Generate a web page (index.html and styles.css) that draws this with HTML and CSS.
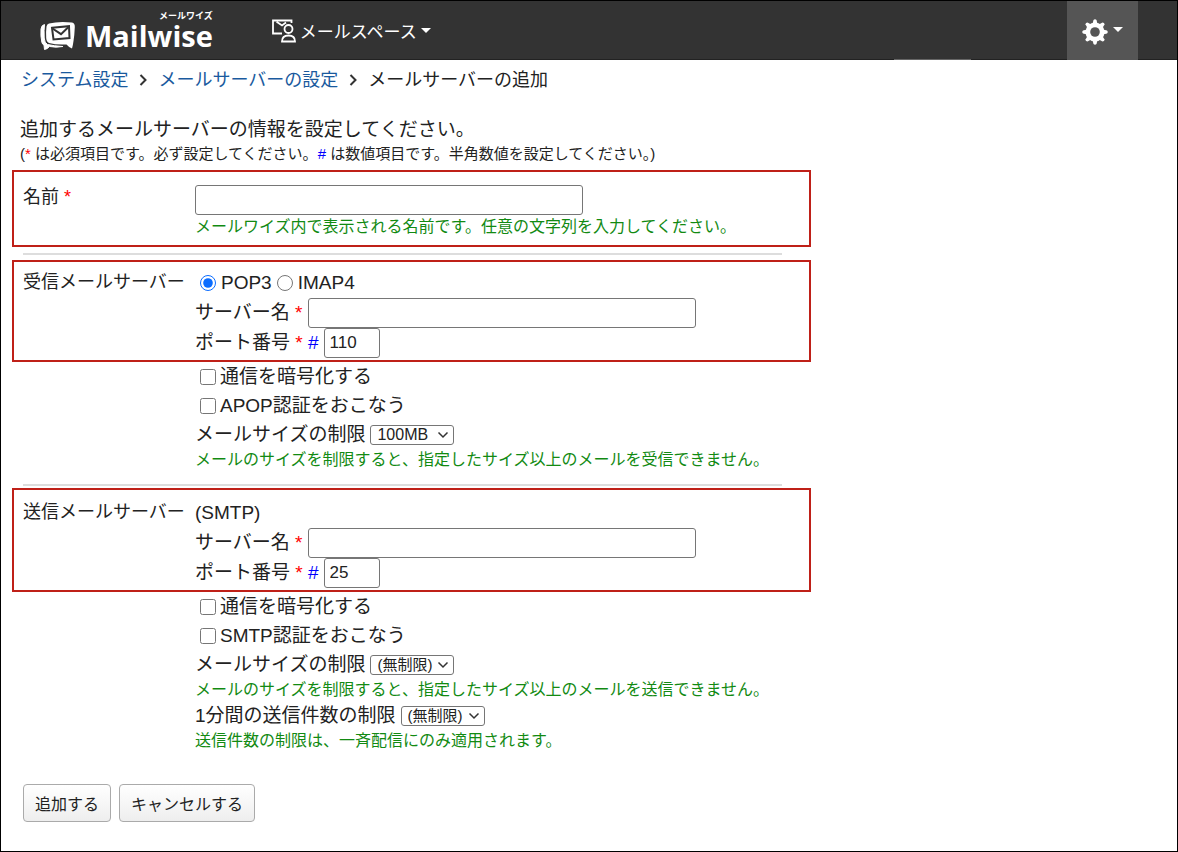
FILE: index.html
```html
<!DOCTYPE html>
<html lang="ja">
<head>
<meta charset="utf-8">
<title>メールサーバーの追加 - Mailwise</title>
<link rel="stylesheet" href="styles.css">
</head>
<body>
<div class="page">
  <header class="header">
    <a class="logo" href="#">
      <svg class="logo-mark" viewBox="0 0 36 30" aria-hidden="true">
        <path d="M10 2.500Q20 0 33 1.500Q36 2 35.800 6Q35.500 14 34.500 20Q34 24 33 27.500Q30 26.500 27.500 23.500Q17 24 10 22Q7.500 21 7.200 17Q6.800 11 7.500 5.500Q8 3 10 2.500Z" fill="#fff"/>
        <path d="M13 6.800L30 5.200L30.500 17L14.500 18.500Z" fill="none" stroke="#333" stroke-width="2"/>
        <path d="M13.500 7.500L22 13.200L29.500 6" fill="none" stroke="#333" stroke-width="2"/>
        <path d="M5.500 3.500Q2.500 4 2 8Q1.500 15 2.800 21Q3.300 23.500 5 24L5.500 28.500Q8.500 28 10.500 25.500Q17 26.800 24 25.500Q15 25 8.500 23.500Q5.500 22 5.200 17Q4.800 9 5.500 3.500Z" fill="#fff" stroke="#fff"/>
      </svg>
      <span class="logo-text"><span class="logo-kana">メールワイズ</span><span class="logo-name">Mailwise</span></span>
    </a>
    <button class="space-menu" type="button">
      <svg class="space-icon" viewBox="0 0 26 26" fill="none" stroke="#fff" stroke-width="1.800" aria-hidden="true">
        <path d="M11 16.500H2V3.500H20.500V6M5.500 5L7.500 6L11 8.500L15 5.500"/>
        <circle cx="17.500" cy="12" r="4"/>
        <path d="M11 24.500Q11 18.500 17.500 18.500Q24 18.500 24 24.500Z"/>
      </svg>
      <span>メールスペース</span>
      <span class="caret"></span>
    </button>
    <button class="gear-menu" type="button" aria-label="設定">
      <svg class="gear" viewBox="0 0 26 26" aria-hidden="true">
        <g fill="#fff">
          <path id="tooth" d="M10.500 5L11.500 1Q13-.500 14.500 1L15.500 5V21L14.500 25Q13 26.500 11.500 25L10.500 21Z"/>
          <use href="#tooth" transform="rotate(45 13 13)"/>
          <use href="#tooth" transform="rotate(90 13 13)"/>
          <use href="#tooth" transform="rotate(135 13 13)"/>
          <circle cx="13" cy="13" r="9.500"/>
        </g>
        <circle cx="13" cy="13" r="4.800" fill="#555"/>
      </svg>
      <span class="caret"></span>
    </button>
  </header>

  <main class="content">
    <nav class="crumbs">
      <a href="#">システム設定</a>
      <svg class="chevron" viewBox="0 0 8 12" aria-hidden="true"><path d="M1.500 1L6.500 6L1.500 11"/></svg>
      <a href="#">メールサーバーの設定</a>
      <svg class="chevron" viewBox="0 0 8 12" aria-hidden="true"><path d="M1.500 1L6.500 6L1.500 11"/></svg>
      <span>メールサーバーの追加</span>
    </nav>

    <p class="lead">追加するメールサーバーの情報を設定してください。</p>
    <p class="note">(<span class="req">*</span> は必須項目です。必ず設定してください。<span class="num">#</span> は数値項目です。半角数値を設定してください。)</p>

    <form class="form">
      <section class="row framed name-row">
        <label class="title" for="name">名前 <span class="req">*</span></label>
        <div class="fields">
          <input class="text" id="name" type="text">
          <p class="help">メールワイズ内で表示される名前です。任意の文字列を入力してください。</p>
        </div>
      </section>

      <hr class="rule">

      <section class="row framed">
        <span class="title">受信メールサーバー</span>
        <div class="fields">
          <div class="line radios">
            <input class="pick" id="pop" type="radio" name="protocol" checked><label for="pop">POP3</label>
            <input class="pick" id="imap" type="radio" name="protocol"><label for="imap">IMAP4</label>
          </div>
          <div class="line"><label for="in-host">サーバー名 <span class="req">*</span></label><input class="text" id="in-host" type="text"></div>
          <div class="line"><label for="in-port">ポート番号 <span class="req">*</span> <span class="num">#</span></label><input class="text port" id="in-port" type="text" value="110"></div>
        </div>
      </section>
      <div class="fields options">
        <div class="line check"><input class="pick" id="in-ssl" type="checkbox"><label for="in-ssl">通信を暗号化する</label></div>
        <div class="line check"><input class="pick" id="apop" type="checkbox"><label for="apop">APOP認証をおこなう</label></div>
        <div class="line"><label for="in-size">メールサイズの制限</label><span class="select"><select id="in-size" class="latin"><option>100MB</option></select><svg viewBox="0 0 12 8" aria-hidden="true"><path d="M1.500 1.500L6 6L10.500 1.500"/></svg></span></div>
        <p class="help">メールのサイズを制限すると、指定したサイズ以上のメールを受信できません。</p>
      </div>

      <hr class="rule late">

      <section class="row framed smtp-row">
        <span class="title">送信メールサーバー</span>
        <div class="fields">
          <div class="line">(SMTP)</div>
          <div class="line"><label for="out-host">サーバー名 <span class="req">*</span></label><input class="text" id="out-host" type="text"></div>
          <div class="line"><label for="out-port">ポート番号 <span class="req">*</span> <span class="num">#</span></label><input class="text port" id="out-port" type="text" value="25"></div>
        </div>
      </section>
      <div class="fields options">
        <div class="line check"><input class="pick" id="out-ssl" type="checkbox"><label for="out-ssl">通信を暗号化する</label></div>
        <div class="line check"><input class="pick" id="smtp-auth" type="checkbox"><label for="smtp-auth">SMTP認証をおこなう</label></div>
        <div class="line"><label for="out-size">メールサイズの制限</label><span class="select"><select id="out-size"><option>(無制限)</option></select><svg viewBox="0 0 12 8" aria-hidden="true"><path d="M1.500 1.500L6 6L10.500 1.500"/></svg></span></div>
        <p class="help">メールのサイズを制限すると、指定したサイズ以上のメールを送信できません。</p>
        <div class="line"><label for="rate">1分間の送信件数の制限</label><span class="select"><select id="rate"><option>(無制限)</option></select><svg viewBox="0 0 12 8" aria-hidden="true"><path d="M1.500 1.500L6 6L10.500 1.500"/></svg></span></div>
        <p class="help">送信件数の制限は、一斉配信にのみ適用されます。</p>
      </div>

      <div class="actions">
        <button class="button" type="submit">追加する</button>
        <button class="button" type="button">キャンセルする</button>
      </div>
    </form>
  </main>
</div>
</body>
</html>
```

FILE: styles.css
```css
* {
  box-sizing: border-box;
}

body {
  margin: 0;
  color: #222;
  background: #fff;
  font-family: "Liberation Sans", "Noto Sans CJK JP", sans-serif;
  font-size: 19px;
  line-height: 24px;
}

p {
  margin: 0;
}

button,
input,
select {
  margin: 0;
  font-family: inherit;
  color: inherit;
}

.page {
  min-height: 100vh;
  border: 1px solid #000;
}

/* Header */
.header {
  position: relative;
  display: flex;
  align-items: stretch;
  height: 59px;
  padding: 0 39px 0 38px;
  background: #333;
  border-bottom: 1px solid #222;
  color: #fff;
}

.header::after {
  content: "";
  position: absolute;
  right: 206px;
  bottom: -1px;
  width: 77px;
  height: 1px;
  background: #666;
}

.logo {
  display: flex;
  align-items: flex-end;
  gap: 10px;
  padding-bottom: 8px;
  color: #fff;
  text-decoration: none;
}

.logo-mark {
  width: 36px;
  height: 30px;
}

.logo-text {
  display: flex;
  flex-direction: column;
  align-items: flex-end;
}

.logo-kana {
  font-size: 9px;
  line-height: 10px;
  font-weight: 700;
}

.logo-name {
  font-family: "Open Sans", sans-serif;
  font-size: 29px;
  line-height: 30px;
  font-weight: 700;
}

.space-menu,
.gear-menu {
  display: flex;
  align-items: center;
  border: 0;
  background: none;
  color: #fff;
}

.space-menu {
  gap: 3px;
  margin-left: 58px;
  padding: 0;
  font-size: 17px;
}

.space-icon {
  width: 26px;
  height: 26px;
}

.caret {
  border: 5px solid transparent;
  border-top-color: #fff;
  border-bottom-width: 0;
}

.space-menu .caret {
  margin-left: 1px;
}

.gear-menu {
  gap: 5px;
  margin: 0 0 -1px auto;
  padding: 2px 15px 0;
  background: #555;
}

.gear {
  width: 26px;
  height: 26px;
}

.gear-menu .caret {
  margin-bottom: 4px;
}

/* Breadcrumbs and introduction */
.content {
  padding: 8px 12px 26px 11px;
}

.crumbs {
  display: flex;
  align-items: center;
  gap: 11px;
  padding-left: 9px;
  font-size: 18px;
}

.crumbs a {
  color: #1a5a9e;
  text-decoration: none;
}

.chevron {
  width: 8px;
  height: 12px;
  fill: none;
  stroke: #333;
  stroke-width: 2;
}

.lead {
  margin-top: 26px;
  padding-left: 8px;
}

.note {
  padding-left: 8px;
  margin-bottom: 4px;
  font-size: 15px;
}

.req {
  color: #f00;
}

.num {
  color: #00f;
}

/* Form */
.form {
  max-width: 799px;
}

.row {
  display: grid;
  grid-template-columns: 172px 1fr;
}

.framed {
  border: 2px solid #bf2018;
  padding: 6px 8px 2px 9px;
}

.title {
  padding-top: 2px;
  font-size: 18px;
  white-space: nowrap;
}

.name-row {
  padding-top: 13px;
  padding-bottom: 6px;
}

.name-row .title {
  padding-top: 0;
}

.name-row .text {
  display: block;
}

.smtp-row {
  padding-top: 8px;
}

.rule {
  height: 2px;
  margin: 6px 29px 5px 11px;
  border: 0;
  background: #ddd;
}

.rule.late {
  margin: 13px 29px 2px 11px;
}

.options {
  padding-left: 183px;
}

.line {
  display: flex;
  align-items: center;
  gap: 5px;
  min-height: 30px;
}

.options .line {
  min-height: 29px;
}

.text {
  width: 388px;
  max-width: 100%;
  height: 30px;
  padding: 0 5px;
  border: 1px solid #767676;
  border-radius: 3px;
  background: #fff;
  font-size: 17px;
}

.port {
  width: 56px;
}

.pick {
  flex: none;
  width: 16px;
  height: 16px;
  accent-color: #0a6cff;
}

.radios,
.check {
  gap: 4px;
  padding-left: 5px;
}

.radios {
  gap: 5px;
}

.help {
  color: #128a12;
  font-size: 16px;
  line-height: 24px;
}

.options .help {
  line-height: 22px;
}

.select {
  position: relative;
  display: inline-flex;
}

.select select {
  appearance: none;
  width: 84px;
  height: 20px;
  padding: 0 6px;
  border: 1px solid #767676;
  border-radius: 3px;
  background: #fff;
  font-size: 15px;
}

.select .latin {
  font-size: 16px;
}

.select svg {
  position: absolute;
  top: 6px;
  right: 5px;
  width: 12px;
  height: 8px;
  fill: none;
  stroke: #333;
  stroke-width: 1.5;
  pointer-events: none;
}

.actions {
  display: flex;
  gap: 8px;
  margin-top: 32px;
  padding-left: 11px;
}

.button {
  height: 38px;
  padding: 0 11px;
  border: 1px solid #aaa;
  border-radius: 4px;
  background: linear-gradient(#fff, #eee);
  font-size: 16px;
}
```
